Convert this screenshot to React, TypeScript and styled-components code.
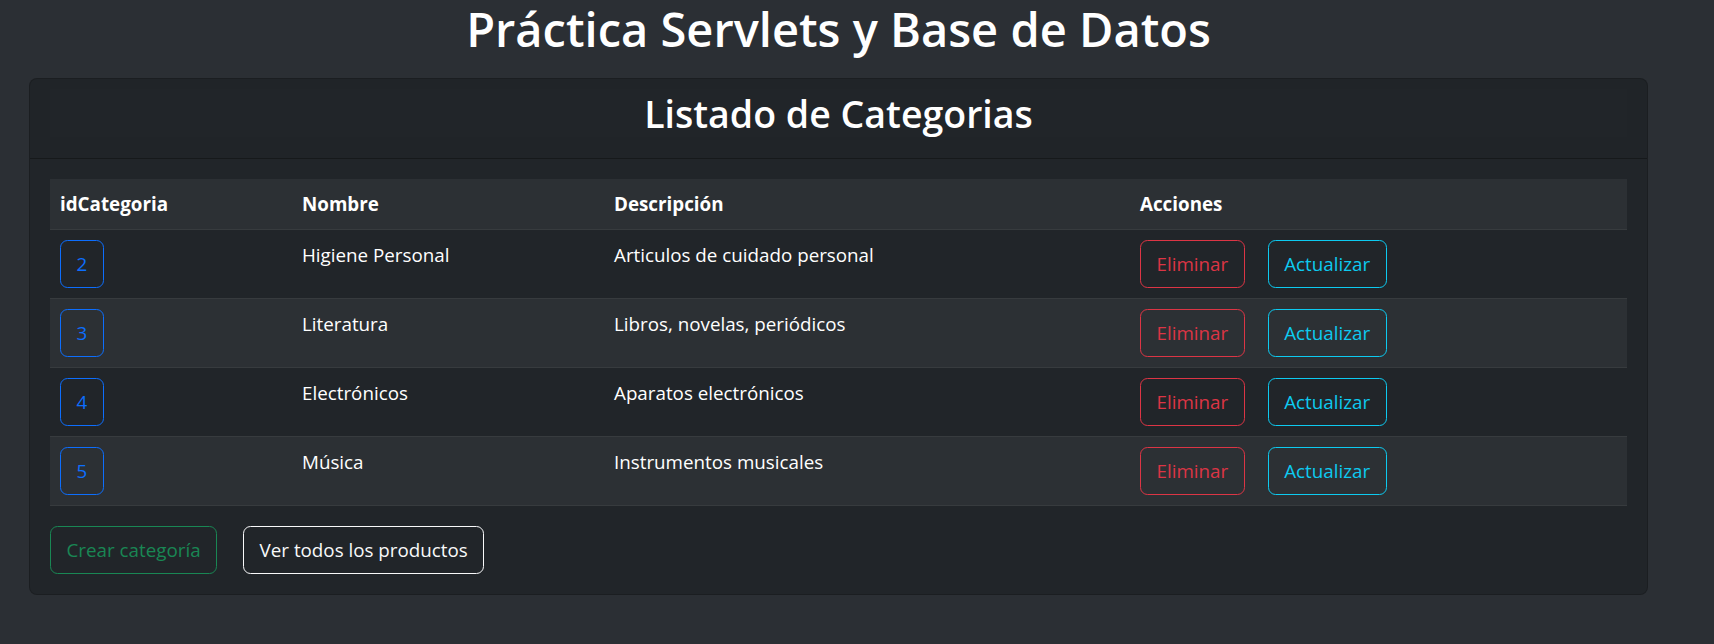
import React from 'react';
import styled, {createGlobalStyle} from 'styled-components';

const GlobalStyle = createGlobalStyle`
  body {
    margin: 0;
    background-color: #2b2f34;
    color: #ffffff;
    font-family: "Open Sans", "Noto Sans", sans-serif;
  }
`;

interface Category {
    id: number;
    name: string;
    description: string;
}

const categories: Category[] = [
    {id: 2, name: 'Higiene Personal', description: 'Articulos de cuidado personal'},
    {id: 3, name: 'Literatura', description: 'Libros, novelas, periódicos'},
    {id: 4, name: 'Electrónicos', description: 'Aparatos electrónicos'},
    {id: 5, name: 'Música', description: 'Instrumentos musicales'},
];

const Page = styled.div`
  padding: 0 66px 0 29px;
`;

const Title = styled.h1`
  margin: 0 0 18px;
  height: 60px;
  line-height: 58px;
  text-align: center;
  font-size: 47px;
  font-weight: 600;
  color: #ffffff;
`;

const Card = styled.div`
  background-color: #212529;
  border: 1px solid rgba(0, 0, 0, 0.175);
  border-radius: 8px;
  overflow: hidden;
`;

const CardHeader = styled.div`
  padding: 10px 20px;
  background-color: rgba(0, 0, 0, 0.02);
  border-bottom: 1px solid rgba(0, 0, 0, 0.3);
`;

const CardTitle = styled.h2`
  margin: 0 0 11px;
  height: 48px;
  line-height: 50px;
  text-align: center;
  font-size: 37.5px;
  font-weight: 600;
  background-color: #212529;
`;

const CardBody = styled.div`
  padding: 20px;
`;

const Table = styled.div`
  display: grid;
  grid-template-columns: 242px 312px 526px 1fr;
  margin-bottom: 20px;
`;

const Row = styled.div<{ $striped?: boolean; $head?: boolean }>`
  display: contents;

  & > div {
    background-color: ${props => props.$striped ? '#2c3034' : 'transparent'};
    font-weight: ${props => props.$head ? 700 : 400};
  }
`;

const Cell = styled.div`
  padding: 10px;
  border-bottom: 1px solid #373b3e;
  font-size: 18.8px;
  line-height: 30px;
  color: #ffffff;
`;

const ActionCell = styled(Cell)`
  display: flex;
  align-items: flex-start;
  gap: 23px;
`;

const OutlineButton = styled.button<{ $tone: string }>`
  padding: 8px 15.5px;
  font-family: inherit;
  font-size: 18.8px;
  line-height: 30px;
  font-weight: 400;
  color: ${props => props.$tone};
  background: transparent;
  border: 1px solid ${props => props.$tone};
  border-radius: 7.5px;
  cursor: pointer;
`;

const Footer = styled.div`
  display: flex;
  gap: 26px;
`;

export default function App() {
    return (
        <Page>
            <GlobalStyle/>
            <Title>Práctica Servlets y Base de Datos</Title>
            <Card>
                <CardHeader>
                    <CardTitle>Listado de Categorias</CardTitle>
                </CardHeader>
                <CardBody>
                    <Table>
                        <Row $striped $head>
                            <Cell>idCategoria</Cell>
                            <Cell>Nombre</Cell>
                            <Cell>Descripción</Cell>
                            <Cell>Acciones</Cell>
                        </Row>
                        {categories.map((category, index) => (
                            <Row key={category.id} $striped={index % 2 === 1}>
                                <Cell>
                                    <OutlineButton $tone="#0d6efd">{category.id}</OutlineButton>
                                </Cell>
                                <Cell>{category.name}</Cell>
                                <Cell>{category.description}</Cell>
                                <ActionCell>
                                    <OutlineButton $tone="#dc3545">Eliminar</OutlineButton>
                                    <OutlineButton $tone="#0dcaf0">Actualizar</OutlineButton>
                                </ActionCell>
                            </Row>
                        ))}
                    </Table>
                    <Footer>
                        <OutlineButton $tone="#198754">Crear categoría</OutlineButton>
                        <OutlineButton $tone="#f8f9fa">Ver todos los productos</OutlineButton>
                    </Footer>
                </CardBody>
            </Card>
        </Page>
    );
}
